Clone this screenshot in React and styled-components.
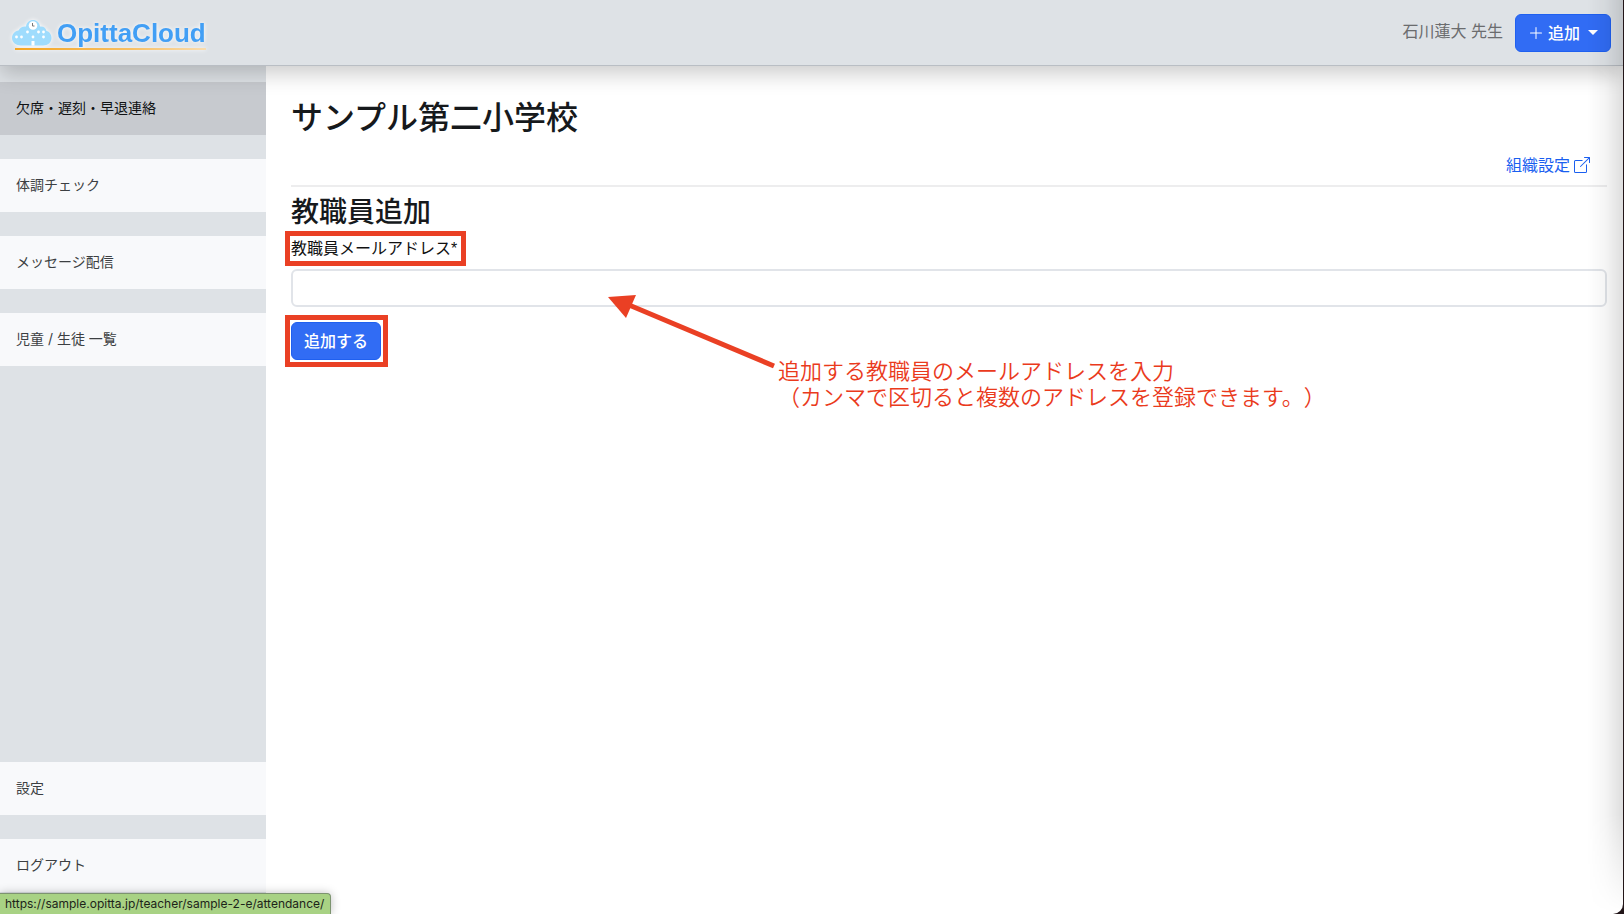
import React, { useState } from 'react'
import styled, { createGlobalStyle } from 'styled-components'
import { BsPlusLg, BsBoxArrowUpRight } from 'react-icons/bs'

const GlobalStyle = createGlobalStyle`
    * { box-sizing: border-box; }
    body {
        margin: 0;
        background: #221518;
        color: #16191c;
        font-family: Inter, "Noto Sans CJK JP", sans-serif;
        font-size: 16px;
        line-height: 24px;
    }
    h1, h2, p, ul { margin: 0; padding: 0; }
    button, input { font: inherit; }
`
const Page = styled.div`
    position: relative;
    display: flex;
    flex-direction: column;
    min-height: 100vh;
    margin-right: 1px;
    background: #fff;
    border-bottom-right-radius: 10px;
    overflow: hidden;
`
const EdgeShade = styled.div`
    position: absolute;
    top: 0;
    right: 0;
    bottom: 0;
    width: 36px;
    pointer-events: none;
    z-index: 3;
    background: linear-gradient(to left, rgba(0, 0, 0, 0.13), rgba(0, 0, 0, 0.04) 50%, transparent);
    mask-image: linear-gradient(to top, transparent, #000 100px);
`
const Header = styled.header`
    position: relative;
    z-index: 1;
    display: flex;
    align-items: center;
    justify-content: space-between;
    height: 66px;
    padding: 0 12px;
    background: #dee2e6;
    border-bottom: 1px solid #b9bec4;
    box-shadow: 0 8px 20px rgba(0, 0, 0, 0.2);
`
const Logo = styled.a`
    display: flex;
    flex-direction: column;
    text-decoration: none;
    filter: drop-shadow(0 0 2px #fff);
`
const LogoRow = styled.span`
    display: flex;
    align-items: center;
    gap: 5px;
    color: #429ff5;
    font-family: "Liberation Sans", Arial, sans-serif;
    font-size: 26px;
    font-weight: bold;
    line-height: 34px;
`
const LogoLine = styled.span`
    height: 2px;
    margin: -2px 0 0 3px;
    background: linear-gradient(to right, #f5a623, #f8bf62 60%, #f9dcae);
`
const UserArea = styled.div`
    display: flex;
    align-items: center;
    gap: 12px;
`
const UserName = styled.span`
    padding-bottom: 4px;
    color: #6b6c6e;
`
const Button = styled.button`
    display: inline-flex;
    align-items: center;
    gap: 4px;
    height: 38px;
    padding: 0 12px;
    border: 1px solid #1f60f0;
    border-radius: 6px;
    background: #316cf4;
    color: #fff;
    font-weight: 500;
    white-space: nowrap;
    cursor: pointer;
`
const Caret = styled.span`
    margin-left: 4px;
    border-top: 5px solid #fff;
    border-left: 5px solid transparent;
    border-right: 5px solid transparent;
`
const Body = styled.div`
    display: grid;
    grid-template-columns: 266px 1fr;
    flex: 1;
`
const Sidebar = styled.nav`
    display: flex;
    flex-direction: column;
    justify-content: space-between;
    padding: 16px 0 22px;
    background: #dee2e6;
`
const MenuList = styled.ul`
    display: flex;
    flex-direction: column;
    gap: 24px;
    list-style: none;
`
const MenuLink = styled.a`
    display: block;
    padding: 14px 16px 15px;
    background: ${({ $active }) => ($active ? '#c7cacf' : '#f8f9fb')};
    color: ${({ $active }) => ($active ? '#101214' : '#3c3f42')};
    font-size: 14px;
    text-decoration: none;
`
const Main = styled.main`
    padding: 33px 16px 32px 25px;
`
const Title = styled.h1`
    font-size: 32px;
    font-weight: 500;
    line-height: 38px;
`
const LinkRow = styled.div`
    display: flex;
    justify-content: flex-end;
    padding: 16px 17px 8px;
    border-bottom: 2px solid #ededee;
`
const OrgLink = styled.a`
    display: flex;
    align-items: center;
    gap: 4px;
    color: #1a5ff0;
    text-decoration: none;
`
const Form = styled.form`
    position: relative;
    display: flex;
    flex-direction: column;
    align-items: flex-start;
    padding-top: 8px;
`
const SubTitle = styled.h2`
    margin-bottom: 8px;
    font-size: 28px;
    font-weight: 500;
    line-height: 34px;
`
const Marked = styled.div`
    position: relative;
    &::after {
        content: '';
        position: absolute;
        inset: ${({ $inset }) => $inset};
        border: 5px solid #ea4024;
        pointer-events: none;
    }
`
const Label = styled.label`
    display: block;
    color: #111;
    font-family: "Liberation Sans", "Noto Sans CJK JP", sans-serif;
`
const TextInput = styled.input`
    width: 100%;
    height: 38px;
    margin: 8px 0 15px;
    padding: 6px 12px;
    border: 2px solid #e1e4e9;
    border-radius: 6px;
    background: #fff;
`
const Arrow = styled.svg`
    position: absolute;
    top: 106px;
    left: 314px;
    width: 176px;
    height: 80px;
    pointer-events: none;
`
const Note = styled.p`
    position: absolute;
    top: 172px;
    left: 487px;
    color: #ea3a1c;
    font-family: "Liberation Sans", "Noto Sans CJK JP", sans-serif;
    font-size: 22px;
    font-weight: 350;
    line-height: 26px;
    text-spacing-trim: space-all;
    white-space: nowrap;
`
const StatusUrl = styled.div`
    position: absolute;
    left: 0;
    bottom: 0;
    z-index: 2;
    padding: 0 6px 0 5px;
    border: 1px solid #7d9470;
    border-width: 1px 1px 0 0;
    border-top-right-radius: 4px;
    background: #a8d284;
    color: #1d2419;
    font-size: 12px;
    line-height: 20px;
    box-shadow: 0 0 10px rgba(0, 0, 0, 0.25);
`

const mainMenu = ['欠席・遅刻・早退連絡', '体調チェック', 'メッセージ配信', '児童 / 生徒 一覧']
const subMenu = ['設定', 'ログアウト']

function CloudIcon() {
    return (
        <svg width='40' height='28' viewBox='0 0 40 28' aria-hidden='true'>
            <path
                d='M9 26.500C4 26.500 0 23.500 0 19C0 15 3 12 6.500 11.500C8 8.500 11 7 14 7.500C14.500 3.500 17.500 1 21 1C24.500 1 27.500 3.500 28 7.500C31.500 7 34 9 34.500 12C37.500 12.500 39.500 15.500 39.500 19C39.500 23.500 36 26.500 31 26.500Z'
                fill='#9fdcfd'
            />
            <circle cx='21' cy='6.500' r='4.300' fill='#fff' />
            <path d='M20.500 4V7H22.500' fill='none' stroke='#777' strokeWidth='1' />
            <g fill='#fff'>
                <circle cx='4.500' cy='18' r='1.400' />
                <circle cx='9.500' cy='18' r='1.400' />
                <circle cx='15.500' cy='13' r='1.400' />
                <circle cx='21' cy='18' r='1.400' />
                <circle cx='26.500' cy='13' r='1.400' />
                <circle cx='31.500' cy='13' r='1.400' />
                <circle cx='31.500' cy='18' r='1.400' />
                <rect x='19.500' y='22' width='3' height='4.500' />
            </g>
        </svg>
    )
}

function Menu({ items, active }) {
    return (
        <MenuList>
            {items.map((item) => (
                <li key={item}>
                    <MenuLink href='#' $active={item === active}>{item}</MenuLink>
                </li>
            ))}
        </MenuList>
    )
}

export default function App() {
    const [email, setEmail] = useState('')

    return (
        <>
            <GlobalStyle />
            <Page>
                <Header>
                    <Logo href='#'>
                        <LogoRow>
                            <CloudIcon />
                            OpittaCloud
                        </LogoRow>
                        <LogoLine />
                    </Logo>
                    <UserArea>
                        <UserName>石川蓮大 先生</UserName>
                        <Button type='button'>
                            <BsPlusLg size={16} />
                            追加
                            <Caret />
                        </Button>
                    </UserArea>
                </Header>
                <Body>
                    <Sidebar>
                        <Menu items={mainMenu} active={mainMenu[0]} />
                        <Menu items={subMenu} />
                    </Sidebar>
                    <Main>
                        <Title>サンプル第二小学校</Title>
                        <LinkRow>
                            <OrgLink href='#'>
                                組織設定
                                <BsBoxArrowUpRight size={16} />
                            </OrgLink>
                        </LinkRow>
                        <Form onSubmit={(e) => e.preventDefault()}>
                            <SubTitle>教職員追加</SubTitle>
                            <Marked $inset='-6px -9px -5px -6px'>
                                <Label htmlFor='email'>教職員メールアドレス*</Label>
                            </Marked>
                            <TextInput
                                id='email'
                                type='text'
                                value={email}
                                onChange={(e) => setEmail(e.target.value)}
                            />
                            <Marked $inset='-7px -7px -7px -6px'>
                                <Button type='submit'>追加する</Button>
                            </Marked>
                            <Arrow viewBox='0 0 176 80' aria-hidden='true'>
                                <path d='M24 12L169 73' stroke='#ea4024' strokeWidth='5' />
                                <path d='M3 4L31 2L21 25Z' fill='#ea4024' />
                            </Arrow>
                            <Note>
                                追加する教職員のメールアドレスを入力
                                <br />
                                （カンマで区切ると複数のアドレスを登録できます。）
                            </Note>
                        </Form>
                    </Main>
                </Body>
                <StatusUrl>https://sample.opitta.jp/teacher/sample-2-e/attendance/</StatusUrl>
                <EdgeShade />
            </Page>
        </>
    )
}
